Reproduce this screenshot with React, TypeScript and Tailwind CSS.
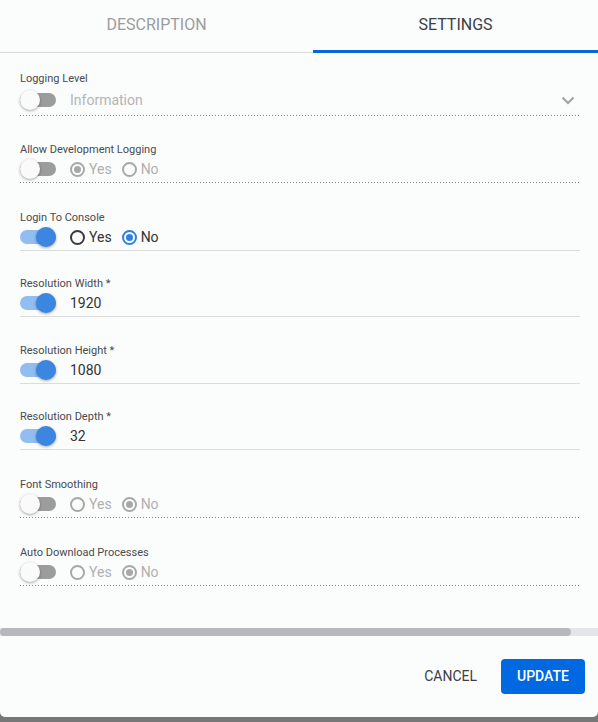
import React from "react";

const dotted =
  "h-px w-full bg-[linear-gradient(to_right,#8a8a8a_34%,transparent_0%)] bg-[length:3px_1px] bg-repeat-x";

function Toggle({ on }: { on: boolean }) {
  return (
    <div className="relative w-[36px] h-[20px] shrink-0">
      <div
        className={
          "absolute left-0 top-[3px] w-[36px] h-[14px] rounded-full " +
          (on ? "bg-[#91bdf0]" : "bg-[#9c9c9c]")
        }
      />
      <div
        className={
          "absolute top-0 w-[20px] h-[20px] rounded-full shadow-[0_1px_3px_rgba(0,0,0,0.35)] " +
          (on ? "left-[16px] bg-[#3a86e0]" : "left-0 bg-[#fafafa]")
        }
      />
    </div>
  );
}

function Radio({
  checked,
  label,
  mode,
}: {
  checked: boolean;
  label: string;
  mode: "disabled" | "enabled";
}) {
  const ring =
    mode === "disabled"
      ? "border-[#a8a8a8]"
      : checked
      ? "border-[#2f80e0]"
      : "border-[#3a3a3a]";
  const dot = mode === "disabled" ? "bg-[#a8a8a8]" : "bg-[#2f80e0]";
  const text = mode === "disabled" ? "text-[#b0b0b0]" : "text-[#333]";
  return (
    <div className="flex items-center">
      <div
        className={
          "w-[15px] h-[15px] rounded-full border-2 flex items-center justify-center " +
          ring
        }
      >
        {checked && <div className={"w-[7px] h-[7px] rounded-full " + dot} />}
      </div>
      <span className={"ml-[4px] text-[14px] leading-none " + text}>{label}</span>
    </div>
  );
}

function Field({
  label,
  on,
  children,
  first,
  mt,
}: {
  label: string;
  on: boolean;
  children: React.ReactNode;
  first?: boolean;
  mt?: string;
}) {
  return (
    <div className={mt ?? ""}>
      <div className="text-[11px] leading-[13px] text-[#484b4e]">{label}</div>
      <div
        className={
          "flex items-center " + (first ? "h-[30px]" : "h-[26px]")
        }
      >
        <Toggle on={on} />
        <div className="ml-[14px] flex-1 flex items-center">{children}</div>
      </div>
      {on ? <div className="h-px w-full bg-[#dcdcdc]" /> : <div className={dotted} />}
    </div>
  );
}

function Radios({ yes, mode }: { yes: boolean; mode: "disabled" | "enabled" }) {
  return (
    <div className="flex items-center gap-[10px]">
      <Radio checked={yes} label="Yes" mode={mode} />
      <Radio checked={!yes} label="No" mode={mode} />
    </div>
  );
}

export default function App() {
  return (
    <div
      className="w-[598px] h-[722px] bg-[#777777] overflow-hidden"
      style={{ fontFamily: "Roboto, 'Liberation Sans', sans-serif" }}
    >
      <div className="h-[717px] bg-[#fbfcfc] rounded-b-[5px] flex flex-col">
        <div className="flex h-[53px] shrink-0">
          <div className="w-[313px] border-b border-[#dadada] flex items-center justify-center text-[16px] text-[#9a9da0] pb-[2px]">
            DESCRIPTION
          </div>
          <div className="flex-1 border-b-[3px] border-[#0a66d8] flex items-center justify-center text-[16px] text-[#3c4043]">
            SETTINGS
          </div>
        </div>

        <div className="pl-[20px] pr-[18px] pt-[19px]">
          <Field label="Logging Level" on={false} first>
            <div className="flex-1 flex items-center justify-between">
              <span className="text-[14px] text-[#b5b5b5]">Information</span>
              <svg width="14" height="9" viewBox="0 0 14 9" className="mr-[5px]">
                <polyline
                  points="1.5,1.5 7,7 12.5,1.5"
                  fill="none"
                  stroke="#a0a0a0"
                  strokeWidth="2"
                />
              </svg>
            </div>
          </Field>
          <Field label="Allow Development Logging" on={false} mt="mt-[27px]">
            <Radios yes={true} mode="disabled" />
          </Field>
          <Field label="Login To Console" on={true} mt="mt-[28px]">
            <Radios yes={false} mode="enabled" />
          </Field>
          <Field label="Resolution Width *" on={true} mt="mt-[26px]">
            <span className="text-[14px] text-[#333]">1920</span>
          </Field>
          <Field label="Resolution Height *" on={true} mt="mt-[27px]">
            <span className="text-[14px] text-[#333]">1080</span>
          </Field>
          <Field label="Resolution Depth *" on={true} mt="mt-[26px]">
            <span className="text-[14px] text-[#333]">32</span>
          </Field>
          <Field label="Font Smoothing" on={false} mt="mt-[28px]">
            <Radios yes={false} mode="disabled" />
          </Field>
          <Field label="Auto Download Processes" on={false} mt="mt-[28px]">
            <Radios yes={false} mode="disabled" />
          </Field>
        </div>

        <div className="mt-[42px] h-[8px] bg-[#e3e6e9] flex">
          <div className="w-[571px] h-full rounded-full bg-[#b6b9bc]" />
        </div>

        <div className="flex justify-end items-center gap-[8px] pr-[13px] mt-[23px]">
          <button className="h-[35px] px-[16px] text-[14px] text-[#3c4043]">
            CANCEL
          </button>
          <button className="h-[35px] w-[84px] rounded-[4px] bg-[#0068e0] text-[14px] font-medium text-white">
            UPDATE
          </button>
        </div>
      </div>
    </div>
  );
}
